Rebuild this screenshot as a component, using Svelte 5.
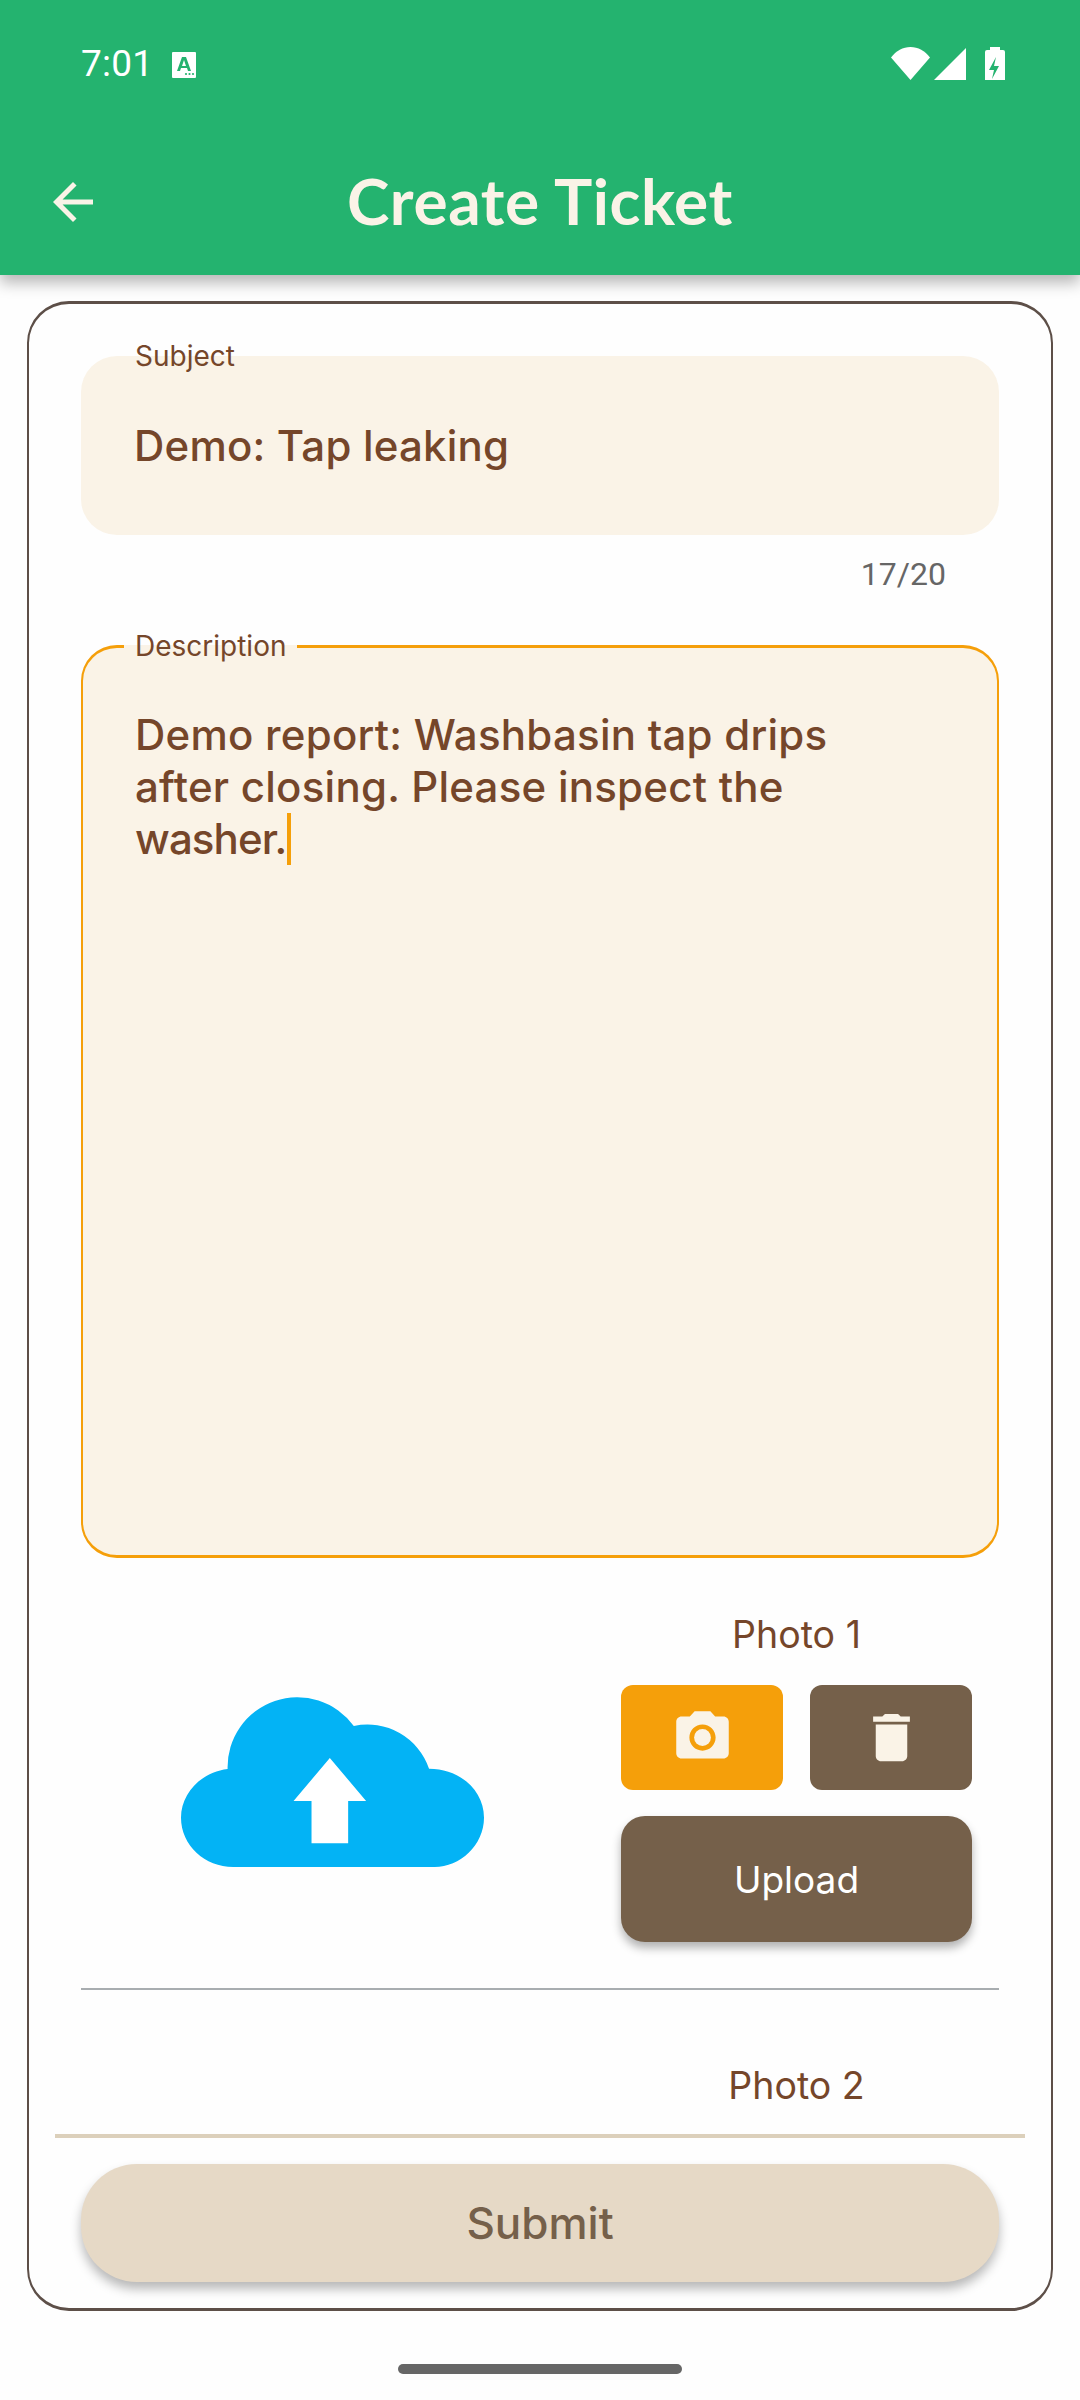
<script>
  const subject = 'Demo: Tap leaking';
  const lines = ['Demo report: Washbasin tap drips', 'after closing. Please inspect the', 'washer.'];
</script>

<div class="page">
  <header class="appbar">
    <div class="status">
      <span class="time">7:01</span>
      <svg class="a-icon" viewBox="0 0 24 26" aria-hidden="true">
        <path fill="#fff" fill-rule="evenodd" d="M1 0h22a1 1 0 0 1 1 1v24a1 1 0 0 1-1 1H1a1 1 0 0 1-1-1V1a1 1 0 0 1 1-1zM10 5 5 19h3l1-3h6l1 3h3L14 5zM12 8l2 6h-4z"/>
        <circle cx="14" cy="22" r="1.1" fill="#24b36f"/><circle cx="17.5" cy="22" r="1.1" fill="#24b36f"/><circle cx="21" cy="22" r="1.1" fill="#24b36f"/>
      </svg>
      <span class="spacer"></span>
      <svg class="sys" width="115" height="34" viewBox="0 0 115 34" aria-hidden="true">
        <path fill="#fff" d="M1 10.500C6 4 13 0 20.500 0S35 4 40 10.500L20.500 33z"/>
        <path fill="#fff" d="M76 1v32H44z"/>
        <path fill="#fff" fill-rule="evenodd" d="M100 0h10v3h3a2 2 0 0 1 2 2v28H95V5a2 2 0 0 1 2-2h3zM106 10l-7 13h5l-2 9 7-13h-5z"/>
      </svg>
    </div>
    <div class="toolbar">
      <svg class="back" viewBox="0 0 24 24" aria-hidden="true"><path fill="#faf3e7" d="M20 11H7.830l5.590-5.590L12 4l-8 8 8 8 1.410-1.410L7.830 13H20v-2z"/></svg>
      <h1>Create Ticket</h1>
    </div>
  </header>

  <section class="card">
    <div class="scroller">
      <div class="subject">
        <span class="subject-label">Subject</span>
        <span class="value sub-value">{subject}</span>
      </div>
      <div class="counter">17/20</div>

      <fieldset class="description">
        <legend>Description</legend>
        {#each lines as line, i}
          {#if i === lines.length - 1}
            <div class="value line"><span class="last">{line}</span><span class="caret"></span></div>
          {:else}
            <div class="value line">{line}</div>
          {/if}
        {/each}
      </fieldset>

      <div class="photo">
        <div class="preview">
          <svg viewBox="93 110 910 510" aria-hidden="true">
            <path fill="#03b3f5" d="M250 620C165 620 93 555 93 472C93 398 155 335 233 326A209.500 209.500 0 0 1 612 197A195 195 0 0 1 838 325C930 325 1003 390 1003 472C1003 555 930 620 855 620Z"/>
            <path fill="#fff" d="M540 293 649 422H595V549H485V422H431Z"/>
          </svg>
        </div>
        <div class="controls">
          <div class="photo-title">Photo 1</div>
          <div class="actions">
            <button class="icon-btn camera" aria-label="Camera">
              <svg viewBox="0 0 24 24"><circle cx="12" cy="12" r="3.200" fill="#faf3e7"/><path fill="#faf3e7" d="M9 2L7.170 4H4c-1.100 0-2 .9-2 2v12c0 1.100.9 2 2 2h16c1.100 0 2-.9 2-2V6c0-1.100-.9-2-2-2h-3.170L15 2H9zm3 15c-2.760 0-5-2.240-5-5s2.240-5 5-5 5 2.240 5 5-2.240 5-5 5z"/></svg>
            </button>
            <button class="icon-btn trash" aria-label="Delete">
              <svg viewBox="0 0 24 24"><path fill="#faf3e7" d="M6 19c0 1.100.9 2 2 2h8c1.100 0 2-.9 2-2V7H6v12zM19 4h-3.500l-1-1h-5l-1 1H5v2h14V4z"/></svg>
            </button>
          </div>
          <button class="upload">Upload</button>
        </div>
      </div>

      <hr />

      <div class="photo-two">Photo 2</div>
    </div>

    <button class="submit">Submit</button>
  </section>

  <div class="home"></div>
</div>

<style>
  :global(body) { margin: 0; background: #fefefe; }
  .page {
    width: 1080px;
    height: 2400px;
    overflow: hidden;
    display: flex;
    flex-direction: column;
    font-family: Inter, "Noto Sans", sans-serif;
    background: #fefefe;
  }
  .appbar {
    position: relative;
    z-index: 1;
    height: 275px;
    flex: none;
    background: #24b36f;
    box-shadow: 0 8px 14px rgba(0, 0, 0, .28);
  }
  .status {
    height: 129px;
    box-sizing: border-box;
    padding: 46px 75px 0 81px;
    display: flex;
    align-items: flex-start;
    color: #fff;
  }
  .time { font: 400 37px/36px Roboto, sans-serif; letter-spacing: .2px; }
  .a-icon { width: 24px; height: 26px; margin: 6px 0 0 19px; }
  .spacer { flex: 1; }
  .sys { margin-top: 1px; }
  .toolbar {
    height: 146px;
    display: grid;
    grid-template-columns: 1fr auto 1fr;
    align-items: center;
  }
  .back { width: 60px; height: 60px; margin-left: 43px; }
  h1 {
    margin: -2px 0 0;
    font: 700 64px/1 Lato, sans-serif;
    letter-spacing: .6px;
    color: #faf3e7;
  }
  .card {
    width: 1026px;
    height: 2010px;
    box-sizing: border-box;
    margin: 26px 27px 0;
    border-style: solid;
    border-color: #5d4f48;
    border-width: 3px 2px;
    border-radius: 42px;
    flex: none;
    display: flex;
    flex-direction: column;
    align-items: center;
  }
  .scroller {
    width: 970px;
    height: 1834px;
    flex: none;
    box-sizing: border-box;
    padding: 52px 26px 0;
    overflow: hidden;
    border-bottom: 4px solid #dcd0bb;
  }
  .value {
    font-size: 42px;
    font-weight: 500;
    color: #75462a;
    line-height: 52px;
  }
  .sub-value { letter-spacing: .2px; }
  .line { letter-spacing: .25px; }
  .last { letter-spacing: -.9px; }
  .subject {
    position: relative;
    height: 179px;
    box-sizing: border-box;
    padding: 0 53px;
    display: flex;
    align-items: center;
    background: #faf3e7;
    border-radius: 36px;
  }
  .subject-label {
    position: absolute;
    left: 54px;
    top: -18px;
    font-size: 28px;
    line-height: 36px;
    color: #75462a;
  }
  .counter {
    margin-top: 21px;
    padding-right: 53px;
    text-align: right;
    font: 400 32px/36px Roboto, sans-serif;
    color: #666;
  }
  .description {
    box-sizing: border-box;
    height: 930px;
    margin: 36px 0 0;
    padding: 45px 52px 0;
    min-width: 0;
    border-style: solid;
    border-color: #f59f0a;
    border-width: 3px 2px;
    border-radius: 36px;
    background: #faf3e7;
  }
  legend {
    margin-left: -11px;
    padding: 0 11px;
    font-size: 28px;
    line-height: 36px;
    color: #75462a;
  }
  .caret {
    display: inline-block;
    width: 4px;
    height: 52px;
    margin-left: 1px;
    vertical-align: top;
    background: #f59f0a;
  }
  .photo { display: flex; margin-top: 55px; }
  .preview {
    width: 540px;
    flex: none;
    box-sizing: border-box;
    padding: 84px 0 0 100px;
  }
  .preview svg { display: block; width: 303px; height: 170px; }
  .controls { width: 351px; }
  .photo-title, .photo-two {
    font-size: 37.500px;
    line-height: 44px;
    text-align: center;
    color: #75462a;
  }
  .actions { display: flex; justify-content: space-between; margin-top: 28px; }
  button { border: 0; padding: 0; font-family: inherit; }
  .icon-btn {
    width: 162px;
    height: 105px;
    border-radius: 12px;
    display: flex;
    align-items: center;
    justify-content: center;
  }
  .icon-btn svg { width: 63px; height: 63px; }
  .camera { background: #f59f0a; }
  .trash { background: #75604a; }
  .upload {
    display: block;
    width: 351px;
    height: 126px;
    margin-top: 26px;
    border-radius: 24px;
    background: #75604a;
    color: #fff;
    font-size: 37px;
    box-shadow: 0 6px 10px rgba(0, 0, 0, .3);
  }
  hr {
    height: 2px;
    margin: 46px 0 0;
    border: 0;
    background: #a8adb0;
  }
  .photo-two { width: 351px; margin: 74px 0 0 540px; }
  .submit {
    width: 918px;
    height: 118px;
    flex: none;
    margin-top: 26px;
    border-radius: 56px;
    background: #e6d9c6;
    color: #75604a;
    font-size: 44px;
    font-weight: 500;
    box-shadow: 0 7px 11px rgba(0, 0, 0, .28);
  }
  .home {
    width: 284px;
    height: 10px;
    flex: none;
    margin: 53px auto 0;
    border-radius: 5px;
    background: #666;
  }
</style>
